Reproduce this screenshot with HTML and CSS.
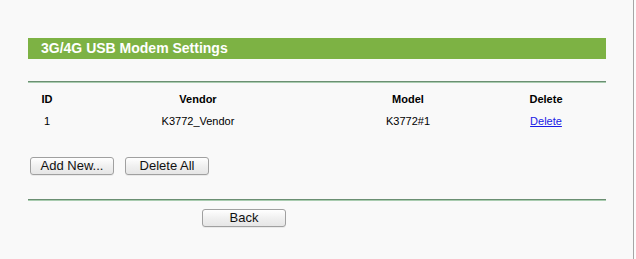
FILE: index.html
```html
<!DOCTYPE html>
<html lang="en">
<head>
    <meta charset="UTF-8">
    <title>3G/4G USB Modem Settings</title>
    <link rel="stylesheet" href="styles.css">
</head>
<body>
    <div class="frame">
        <div class="content">
            <div class="title-bar">3G/4G USB Modem Settings</div>
            <hr class="rule">
            <table class="modem-table">
                <colgroup>
                    <col class="col-id">
                    <col class="col-vendor">
                    <col class="col-model">
                    <col class="col-delete">
                </colgroup>
                <tr>
                    <th>ID</th>
                    <th>Vendor</th>
                    <th>Model</th>
                    <th>Delete</th>
                </tr>
                <tr>
                    <td>1</td>
                    <td>K3772_Vendor</td>
                    <td>K3772#1</td>
                    <td><a href="#">Delete</a></td>
                </tr>
            </table>
            <div class="actions">
                <button class="btn">Add New...</button>
                <button class="btn">Delete All</button>
            </div>
            <hr class="rule">
            <div class="footer-actions">
                <button class="btn">Back</button>
            </div>
        </div>
    </div>
</body>
</html>
```

FILE: styles.css
```css
html, body {
    margin: 0;
    padding: 0;
    height: 100%;
    background-color: #fcfcfc;
}

body {
    font-family: "Liberation Sans", Arial, sans-serif;
    color: #000;
}

.frame {
    width: 634px;
    height: 100%;
    box-sizing: border-box;
    background-color: #f9f9f9;
    border-right: 1px solid #a6a6a6;
}

.content {
    width: 578px;
    padding: 38px 0 0 28px;
}

.title-bar {
    background-color: #7db244; /* green header */
    color: #fff;
    font-size: 14px;
    font-weight: bold;
    height: 21px;
    line-height: 21px;
    padding-left: 13px;
}

.rule {
    margin: 0;
    height: 1px;
    border: none;
    border-top: 1px solid #6b8f72;
    background-color: #a9ccb0;
}

.title-bar + .rule {
    margin-top: 22px;
}

.modem-table {
    width: 578px;
    margin-top: 5px;
    border-collapse: collapse;
    table-layout: fixed;
    font-size: 11px;
}

.col-id { width: 38px; }
.col-vendor { width: 264px; }
.col-model { width: 156px; }
.col-delete { width: 120px; }

.modem-table th,
.modem-table td {
    text-align: center;
    height: 22px;
    padding: 0;
}

.modem-table a {
    color: #1a1ae6;
}

.actions {
    display: flex;
    gap: 11px;
    padding: 25px 0 0 2px;
    height: 42px;
}

.btn {
    width: 84px;
    height: 18px;
    padding: 0;
    font-family: "Liberation Sans", Arial, sans-serif;
    font-size: 13px;
    line-height: 16px;
    color: #111;
    border: 1px solid #a0a0a0;
    border-radius: 3px;
    background: linear-gradient(#ffffff, #f0f0f0 50%, #e6e6e6);
    box-shadow: 0 1px 0 rgba(0, 0, 0, 0.06);
}

.footer-actions {
    padding: 7px 0 0 174px;
}
```
